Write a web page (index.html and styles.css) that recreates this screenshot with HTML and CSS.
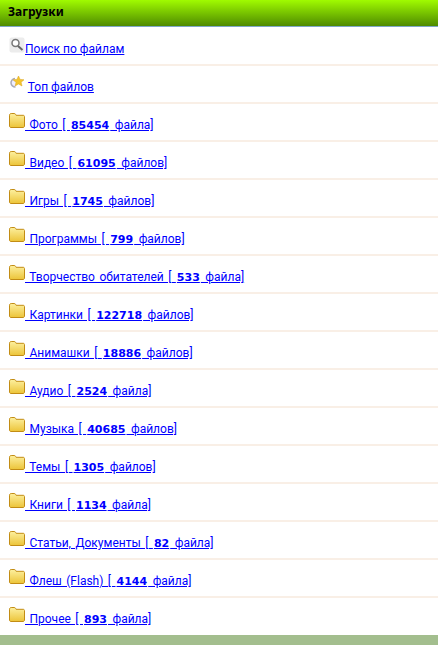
FILE: index.html
```html
<!DOCTYPE html>
<html lang="ru">
<head>
<meta charset="utf-8">
<title>Загрузки</title>
<link rel="stylesheet" href="styles.css">
</head>
<body>
<svg class="defs" width="0" height="0" aria-hidden="true">
  <defs>
    <linearGradient id="fg" x1="0" y1="0" x2="0" y2="1">
      <stop offset="0" stop-color="#fdf0a0"/>
      <stop offset="1" stop-color="#ecc438"/>
    </linearGradient>
    <symbol id="folder" viewBox="0 0 16 15">
      <path d="M.5 13V2.200C.5 1.200 1.200.5 2.200.5h3c.8 0 1.200.4 1.600 1.200l.3.6h7c1 0 1.400.6 1.400 1.400V13c0 .9-.6 1.500-1.500 1.500H2C1.100 14.500.5 13.900.5 13z" fill="url(#fg)" stroke="#c28c14"/>
    </symbol>
  </defs>
</svg>
<header class="title">Загрузки</header>
<ul class="list">
  <li class="row row-search"><svg class="ico ico-search" viewBox="0 0 16 16"><rect x=".5" y=".5" width="15" height="15" rx="2" fill="#ececec"/><circle cx="6.500" cy="6" r="3.500" fill="#fff" stroke="#777" stroke-width="1.500"/><path d="M9 9l4.500 4" stroke="#666" stroke-width="2"/></svg><a class="plain" href="#">Поиск по файлам</a></li>
  <li class="row"><svg class="ico ico-star" viewBox="0 0 16 14"><path d="M6 3.500A4.200 4.200 0 1 0 6.500 12" fill="#eef" stroke="#a9a9b8" stroke-width="1.500"/><path d="M9.500 1l1.600 3.400 3.900.4-2.900 2.500.9 3.700-3.500-2-3.400 2 .9-3.700L4 4.800l3.900-.4z" fill="#f5c52c" stroke="#d9a017" stroke-width=".5"/></svg> <a class="plain" href="#">Топ файлов</a></li>
  <li class="row"><svg class="ico ico-folder"><use href="#folder"/></svg><a href="#"> Фото [ <b>85454</b> файла]</a></li>
  <li class="row"><svg class="ico ico-folder"><use href="#folder"/></svg><a href="#"> Видео [ <b>61095</b> файлов]</a></li>
  <li class="row"><svg class="ico ico-folder"><use href="#folder"/></svg><a href="#"> Игры [ <b>1745</b> файлов]</a></li>
  <li class="row"><svg class="ico ico-folder"><use href="#folder"/></svg><a href="#"> Программы [ <b>799</b> файлов]</a></li>
  <li class="row"><svg class="ico ico-folder"><use href="#folder"/></svg><a href="#"> Творчество обитателей [ <b>533</b> файла]</a></li>
  <li class="row"><svg class="ico ico-folder"><use href="#folder"/></svg><a href="#"> Картинки [ <b>122718</b> файлов]</a></li>
  <li class="row"><svg class="ico ico-folder"><use href="#folder"/></svg><a href="#"> Анимашки [ <b>18886</b> файлов]</a></li>
  <li class="row"><svg class="ico ico-folder"><use href="#folder"/></svg><a href="#"> Аудио [ <b>2524</b> файла]</a></li>
  <li class="row"><svg class="ico ico-folder"><use href="#folder"/></svg><a href="#"> Музыка [ <b>40685</b> файлов]</a></li>
  <li class="row"><svg class="ico ico-folder"><use href="#folder"/></svg><a href="#"> Темы [ <b>1305</b> файлов]</a></li>
  <li class="row"><svg class="ico ico-folder"><use href="#folder"/></svg><a href="#"> Книги [ <b>1134</b> файла]</a></li>
  <li class="row"><svg class="ico ico-folder"><use href="#folder"/></svg><a href="#"> Статьи, Документы [ <b>82</b> файла]</a></li>
  <li class="row"><svg class="ico ico-folder"><use href="#folder"/></svg><a href="#"> Флеш (Flash) [ <b>4144</b> файла]</a></li>
  <li class="row row-last"><svg class="ico ico-folder"><use href="#folder"/></svg><a href="#"> Прочее [ <b>893</b> файла]</a></li>
</ul>
<footer class="foot"></footer>
</body>
</html>
```
FILE: styles.css
```css
* { box-sizing: border-box; }
html, body { margin: 0; padding: 0; }
body {
  width: 438px;
  height: 645px;
  overflow: hidden;
  background: #fff;
  font-family: Roboto, sans-serif;
  font-size: 12px;
}
.defs { display: block; height: 0; }
.title {
  height: 27px;
  padding: 3px 8px 0;
  background: linear-gradient(#a0fb00, #4f8b00);
  border-bottom: 1px solid #7fa8c8;
  color: #000;
  font: bold 12px/17px "Noto Sans", sans-serif;
}
.list { list-style: none; margin: 0; padding: 0; }
.row {
  height: 38px;
  padding: 9px 9px 0;
  border-bottom: 2px solid #f9efe6;
  line-height: 16px;
  white-space: nowrap;
}
.row-search { height: 39px; padding-top: 10px; }
.row-last { border-bottom: 0; height: 37px; }
a { color: #0000ff; white-space: pre; word-spacing: 1.500px; }
a.plain { word-spacing: 0; }
b { font: bold 11px "DejaVu Sans", sans-serif; word-spacing: 0; margin: 0 1px; }
.ico { display: inline-block; }
.ico-folder { width: 16px; height: 15px; vertical-align: 1px; }
.ico-search { width: 16px; height: 16px; vertical-align: 0; }
.ico-star { width: 16px; height: 14px; vertical-align: 2px; }
.foot { height: 10px; background: #a3be8e; }
```
